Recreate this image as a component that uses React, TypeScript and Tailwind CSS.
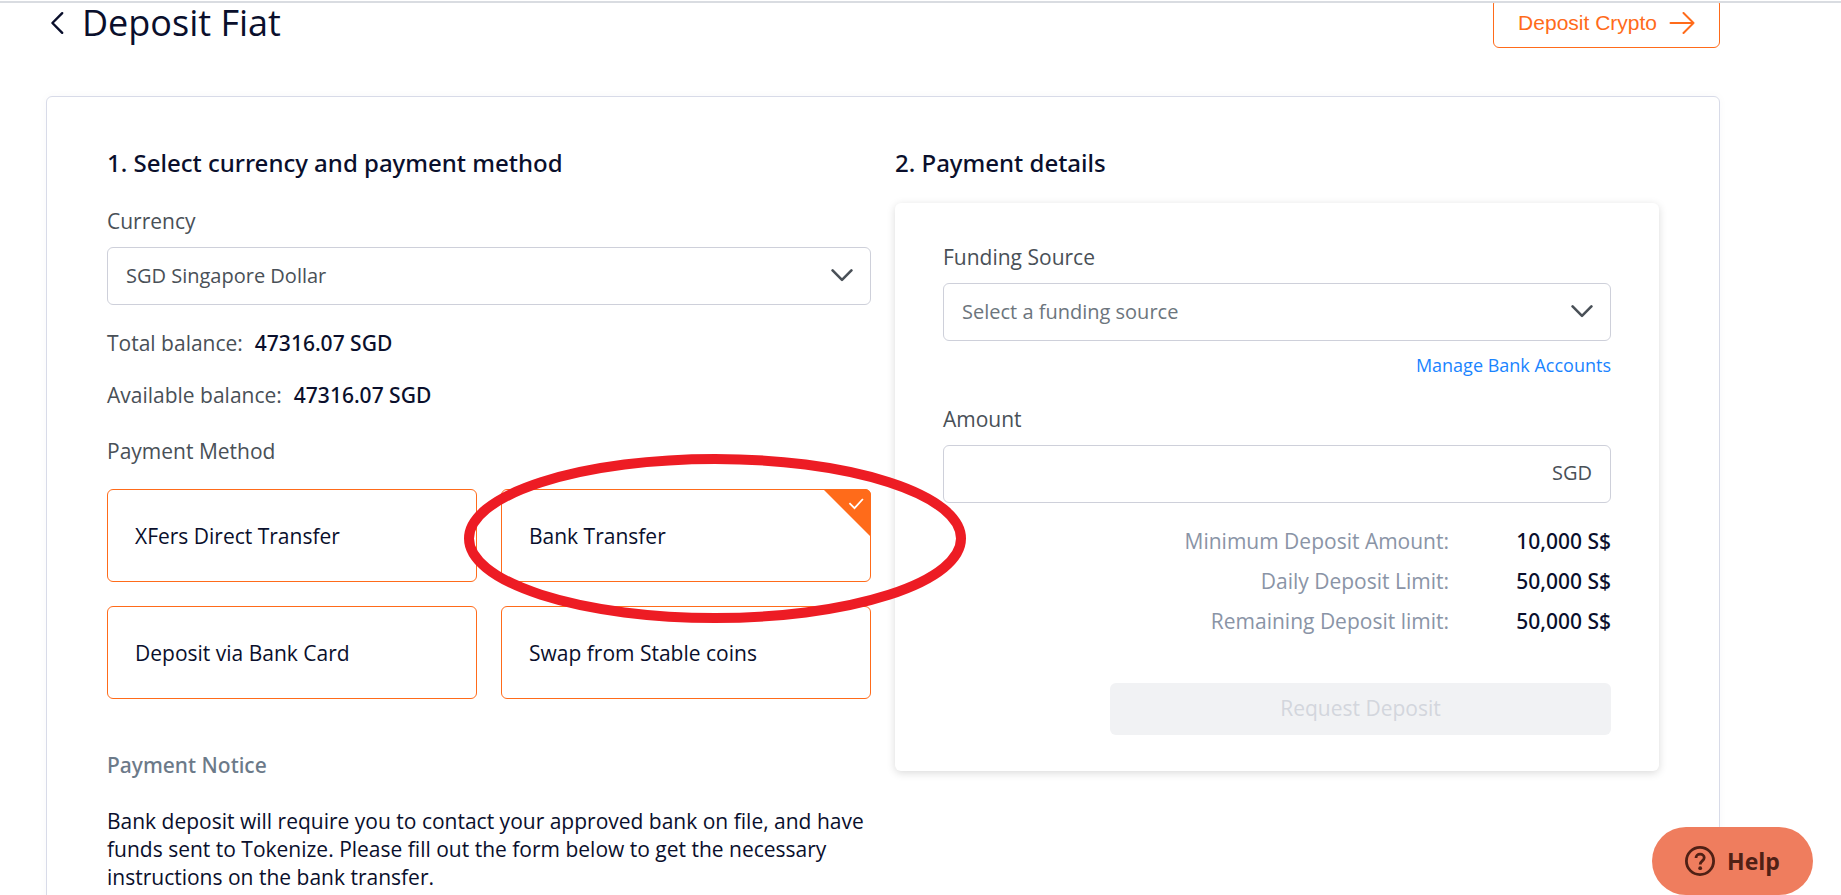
import { useState, type ReactNode } from "react";

const PAYMENT_METHODS = [
  "XFers Direct Transfer",
  "Bank Transfer",
  "Deposit via Bank Card",
  "Swap from Stable coins",
];

const LIMITS = [
  { label: "Minimum Deposit Amount:", value: "10,000 S$" },
  { label: "Daily Deposit Limit:", value: "50,000 S$" },
  { label: "Remaining Deposit limit:", value: "50,000 S$" },
];

function SelectField({
  id,
  textClass,
  children,
}: {
  id: string;
  textClass: string;
  children: ReactNode;
}) {
  return (
    <div className="relative">
      <select
        id={id}
        className={`block h-[58px] w-full appearance-none rounded-md border border-[#ced0da] bg-white pr-14 pl-[18px] text-xl ${textClass}`}
      >
        {children}
      </select>
      <svg
        className="pointer-events-none absolute top-[22px] right-[18px] h-3.5 w-[22px] text-[#495057]"
        viewBox="0 0 22 14"
        fill="none"
        stroke="currentColor"
        strokeWidth="2.6"
        strokeLinecap="round"
        strokeLinejoin="round"
        aria-hidden="true"
      >
        <path d="M1.6 1.4 11 10.8 20.4 1.4" />
      </svg>
    </div>
  );
}

function Balance({ label, value }: { label: string; value: string }) {
  return (
    <p className="flex gap-3 text-[21px] leading-7 text-[#495057]">
      <span>{label}</span>
      <span className="font-['Noto_Sans',sans-serif] font-medium text-[#0a0f2c]">
        {value}
      </span>
    </p>
  );
}

function MethodOption({
  name,
  selected,
  onSelect,
}: {
  name: string;
  selected: boolean;
  onSelect: () => void;
}) {
  return (
    <label className="relative flex h-[93px] cursor-pointer items-center rounded-md border border-[#ff6b1a] px-[27px] text-[21px] leading-7 text-[#0a0f2c]">
      <input
        type="radio"
        name="payment-method"
        className="sr-only"
        checked={selected}
        onChange={onSelect}
      />
      {name}
      {selected && (
        <>
          <svg
            className="absolute -top-px -right-px size-12 rounded-tr-md"
            viewBox="0 0 48 48"
            aria-hidden="true"
          >
            <path d="M0 0h48v48z" fill="#ff6b1a" />
            <path
              d="m26.4 14.2 5.1 5 8.4-9.2"
              fill="none"
              stroke="#fff"
              strokeWidth="1.8"
            />
          </svg>
          <svg
            className="pointer-events-none absolute -top-9 -left-[38px] z-10 h-[169px] w-[calc(100%+134px)]"
            aria-hidden="true"
          >
            <ellipse
              cx="50%"
              cy="50%"
              className="fill-none stroke-[#ed1c24] stroke-[10px] [rx:calc(50%-5px)] [ry:calc(50%-5px)]"
            />
          </svg>
        </>
      )}
    </label>
  );
}

export default function App() {
  const [method, setMethod] = useState("Bank Transfer");

  return (
    <div className="relative h-screen overflow-hidden bg-white font-['Open_Sans',sans-serif] text-[#0a0f2c]">
      <div className="relative z-10 h-[3px] border-b-2 border-[#d9dce1] bg-white" />

      <div className="mr-[121px] ml-[46px]">
        <header className="-mt-[5px] flex h-[50px] items-center justify-between">
          <div className="flex items-center gap-4">
            <button type="button" aria-label="Back" className="ml-1">
              <svg
                className="h-6 w-4"
                viewBox="0 0 16 24"
                fill="none"
                stroke="currentColor"
                strokeWidth="2.4"
                strokeLinecap="round"
                strokeLinejoin="round"
                aria-hidden="true"
              >
                <path d="M12.2 2.2 2.4 12l9.8 9.8" />
              </svg>
            </button>
            <h1 className="text-4xl leading-9 font-normal">Deposit Fiat</h1>
          </div>
          <button
            type="button"
            className="flex h-[50px] items-center gap-3 rounded-md border border-[#ff6b1a] px-6 font-['Liberation_Sans',sans-serif] text-[21px] text-[#ff6b1a]"
          >
            Deposit Crypto
            <svg
              className="h-[22px] w-[26px]"
              viewBox="0 0 26 22"
              fill="none"
              stroke="currentColor"
              strokeWidth="2"
              strokeLinecap="round"
              strokeLinejoin="round"
              aria-hidden="true"
            >
              <path d="M1.5 11h23M14.5 1l10 10-10 10" />
            </svg>
          </button>
        </header>

        <main className="mt-12 grid grid-cols-2 items-start gap-6 rounded-md border border-[#d8dbe8] px-[60px] pt-12 pb-16 shadow-[0_0_10px_rgba(20,30,80,0.03)]">
          <section>
            <h2 className="font-['Noto_Sans',sans-serif] text-2xl leading-9 font-medium">
              1. Select currency and payment method
            </h2>

            <label
              htmlFor="currency"
              className="mt-[26px] mb-3 block text-[21px] leading-7 text-[#495057]"
            >
              Currency
            </label>
            <SelectField id="currency" textClass="text-[#495057]">
              <option>SGD Singapore Dollar</option>
            </SelectField>

            <div className="mt-6 flex flex-col gap-6">
              <Balance label="Total balance:" value="47316.07 SGD" />
              <Balance label="Available balance:" value="47316.07 SGD" />
            </div>

            <fieldset className="mt-7">
              <legend className="mb-6 text-[21px] leading-7 text-[#495057]">
                Payment Method
              </legend>
              <div className="grid grid-cols-2 gap-6">
                {PAYMENT_METHODS.map((name) => (
                  <MethodOption
                    key={name}
                    name={name}
                    selected={name === method}
                    onSelect={() => setMethod(name)}
                  />
                ))}
              </div>
            </fieldset>

            <h3 className="mt-[52px] font-['Noto_Sans',sans-serif] text-[21px] leading-7 font-medium text-[#6c7a89]">
              Payment Notice
            </h3>
            <p className="mt-7 text-[21px] leading-7">
              Bank deposit will require you to contact your approved bank on
              file, and have funds sent to Tokenize. Please fill out the form
              below to get the necessary instructions on the bank transfer.
            </p>
          </section>

          <section>
            <h2 className="font-['Noto_Sans',sans-serif] text-2xl leading-9 font-medium">
              2. Payment details
            </h2>
            <form className="mt-[22px] rounded-md bg-white px-12 pt-10 pb-9 shadow-[0_2px_8px_rgba(0,0,0,0.15)]">
              <label
                htmlFor="funding"
                className="mb-3 block text-[21px] leading-7 text-[#495057]"
              >
                Funding Source
              </label>
              <SelectField id="funding" textClass="text-[#6c757d]">
                <option>Select a funding source</option>
              </SelectField>
              <div className="mt-3 text-right text-lg leading-6">
                <a href="#bank-accounts" className="text-[#1a84ff]">
                  Manage Bank Accounts
                </a>
              </div>

              <label
                htmlFor="amount"
                className="mt-7 mb-3 block text-[21px] leading-7 text-[#495057]"
              >
                Amount
              </label>
              <div className="flex h-[58px] items-center rounded-md border border-[#ced0da] px-[18px] pb-0.5 text-xl text-[#495057]">
                <input
                  id="amount"
                  type="text"
                  className="min-w-0 flex-1 outline-none"
                />
                <span>SGD</span>
              </div>

              <dl className="mt-6 flex flex-col gap-3 text-right text-[21px] leading-7">
                {LIMITS.map(({ label, value }) => (
                  <div key={label} className="flex justify-end">
                    <dt className="text-[#8a94a6]">{label}</dt>
                    <dd className="w-[162px] font-['Noto_Sans',sans-serif] font-medium">
                      {value}
                    </dd>
                  </div>
                ))}
              </dl>

              <button
                type="button"
                disabled
                className="mt-12 ml-auto block h-[52px] w-3/4 rounded-md bg-[#f1f2f4] text-[21px] text-[#d3d6dd]"
              >
                Request Deposit
              </button>
            </form>
          </section>
        </main>
      </div>

      <button
        type="button"
        className="fixed right-7 bottom-0 z-20 flex h-[68px] w-[161px] items-center justify-center gap-3 rounded-full bg-[#ef7d5e] text-[23px] font-bold text-[#4f2015]"
      >
        <svg className="size-[30px]" viewBox="0 0 30 30" fill="none" aria-hidden="true">
          <circle cx="15" cy="15" r="13.6" stroke="currentColor" strokeWidth="2.8" />
          <path
            d="M11 12c0-2.2 1.7-3.8 4.1-3.8s4.1 1.5 4.1 3.6c0 3-4 3.2-4 6.6"
            stroke="currentColor"
            strokeWidth="2.8"
          />
          <circle cx="15.2" cy="22.2" r="1.9" fill="currentColor" />
        </svg>
        Help
      </button>
    </div>
  );
}
